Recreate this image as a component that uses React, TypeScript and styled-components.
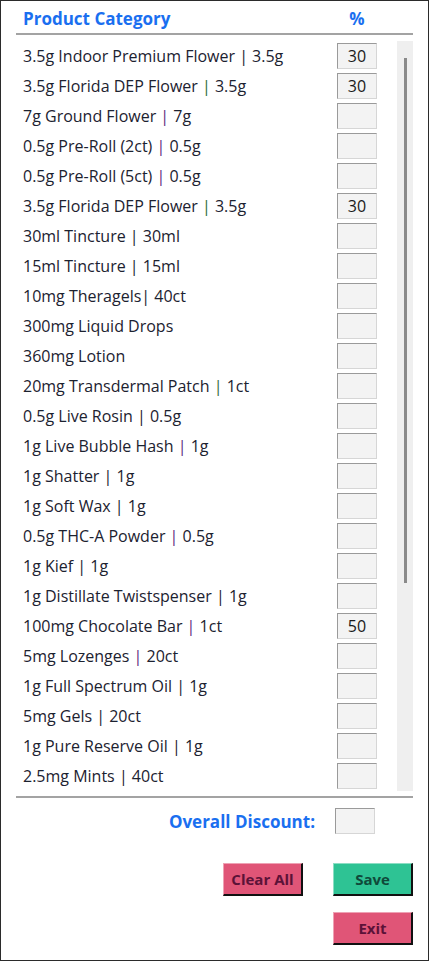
import React from "react";
import styled, { createGlobalStyle } from "styled-components";

const Global = createGlobalStyle`
  html, body { margin: 0; padding: 0; background: #fff; }
  body { font-family: "Open Sans", "Liberation Sans", sans-serif; }
  * { box-sizing: border-box; }
`;

const Frame = styled.div`
  width: 429px;
  height: 961px;
  border: 1px solid #2b2b2b;
  display: flex;
  flex-direction: column;
  background: #fff;
`;

const Header = styled.div`
  margin: 0 15px;
  height: 34px;
  border-bottom: 2px solid #a3a3a3;
  display: flex;
  align-items: center;
  padding-left: 7px;
  padding-top: 2px;
  color: #1a6ff0;
  font-weight: 700;
  font-size: 17px;
`;

const HeaderTitle = styled.div`
  flex: 1;
`;

const HeaderPct = styled.div`
  width: 40px;
  margin-right: 36px;
  text-align: center;
`;

const ListArea = styled.div`
  margin: 6px 15px 0 15px;
  height: 750px;
  display: flex;
`;

const Rows = styled.div`
  flex: 1;
  overflow: hidden;
  display: flex;
  flex-direction: column;
`;

const Row = styled.div`
  height: 30px;
  flex: 0 0 30px;
  display: flex;
  align-items: center;
  padding-left: 7px;
  padding-right: 20px;
  font-size: 16px;
  color: #1c2230;
`;

const RowLabel = styled.div`
  flex: 1;
  white-space: nowrap;
`;

const Pipe = styled.span<{ $tone: string }>`
  color: ${(p) => p.$tone};
`;

const Box = styled.div`
  width: 40px;
  height: 26px;
  background: #f3f3f3;
  border-top: 1px solid #9a9a9a;
  border-left: 1px solid #9a9a9a;
  border-right: 1px solid #d6d6d6;
  border-bottom: 1px solid #d6d6d6;
  display: flex;
  align-items: center;
  justify-content: center;
  font-size: 16px;
  color: #1a1a1a;
  font-weight: 400;
`;

const Track = styled.div`
  width: 16px;
  background: #efefef;
  display: flex;
  justify-content: center;
  padding-top: 17px;
`;

const Thumb = styled.div`
  width: 3px;
  height: 525px;
  background: #8a8a8a;
`;

const Divider = styled.div`
  margin: 5px 15px 0 15px;
  border-top: 2px solid #a3a3a3;
`;

const DiscountRow = styled.div`
  display: flex;
  align-items: center;
  justify-content: flex-end;
  padding-right: 53px;
  margin-top: 10px;
  gap: 20px;
  color: #1a6ff0;
  font-weight: 700;
  font-size: 17px;
`;

const ButtonGrid = styled.div`
  display: grid;
  grid-template-columns: 80px 80px;
  column-gap: 30px;
  row-gap: 16px;
  justify-content: end;
  padding-right: 15px;
  margin-top: 29px;
`;

const Btn = styled.button<{ $bg: string; $fg: string; $col: number }>`
  grid-column: ${(p) => p.$col};
  height: 33px;
  background: ${(p) => p.$bg};
  color: ${(p) => p.$fg};
  font-family: "Open Sans", "Liberation Sans", sans-serif;
  font-weight: 700;
  font-size: 15px;
  border: none;
  border-top: 1px solid rgba(255, 255, 255, 0.45);
  border-left: 1px solid rgba(255, 255, 255, 0.45);
  border-right: 2px solid #111;
  border-bottom: 2px solid #111;
  padding: 0;
  cursor: pointer;
`;

type Item = { name: string; unit?: string; tone: string; value?: string };

const GREEN = "#2f6a3a";
const PURPLE = "#5e2a80";
const DARK = "#1c2230";

const items: Item[] = [
  { name: "3.5g Indoor Premium Flower", unit: "3.5g", tone: DARK, value: "30" },
  { name: "3.5g Florida DEP Flower", unit: "3.5g", tone: GREEN, value: "30" },
  { name: "7g Ground Flower", unit: "7g", tone: PURPLE },
  { name: "0.5g Pre-Roll (2ct)", unit: "0.5g", tone: PURPLE },
  { name: "0.5g Pre-Roll (5ct)", unit: "0.5g", tone: PURPLE },
  { name: "3.5g Florida DEP Flower", unit: "3.5g", tone: GREEN, value: "30" },
  { name: "30ml Tincture", unit: "30ml", tone: DARK },
  { name: "15ml Tincture", unit: "15ml", tone: DARK },
  { name: "10mg Theragels", unit: "40ct", tone: DARK },
  { name: "300mg Liquid Drops", tone: DARK },
  { name: "360mg Lotion", tone: DARK },
  { name: "20mg Transdermal Patch", unit: "1ct", tone: GREEN },
  { name: "0.5g Live Rosin", unit: "0.5g", tone: DARK },
  { name: "1g Live Bubble Hash", unit: "1g", tone: PURPLE },
  { name: "1g Shatter", unit: "1g", tone: DARK },
  { name: "1g Soft Wax", unit: "1g", tone: DARK },
  { name: "0.5g THC-A Powder", unit: "0.5g", tone: PURPLE },
  { name: "1g Kief", unit: "1g", tone: DARK },
  { name: "1g Distillate Twistspenser", unit: "1g", tone: DARK },
  { name: "100mg Chocolate Bar", unit: "1ct", tone: PURPLE, value: "50" },
  { name: "5mg Lozenges", unit: "20ct", tone: PURPLE },
  { name: "1g Full Spectrum Oil", unit: "1g", tone: DARK },
  { name: "5mg Gels", unit: "20ct", tone: DARK },
  { name: "1g Pure Reserve Oil", unit: "1g", tone: DARK },
  { name: "2.5mg Mints", unit: "40ct", tone: DARK },
];

export default function App() {
  return (
    <>
      <Global />
      <Frame>
        <Header>
          <HeaderTitle>Product Category</HeaderTitle>
          <HeaderPct>%</HeaderPct>
        </Header>
        <ListArea>
          <Rows>
            {items.map((it, i) => (
              <Row key={i}>
                <RowLabel>
                  {it.name}
                  {it.unit !== undefined && (
                    <>
                      {it.name === "10mg Theragels" ? "" : " "}
                      <Pipe $tone={it.tone}>|</Pipe> {it.unit}
                    </>
                  )}
                </RowLabel>
                <Box>{it.value}</Box>
              </Row>
            ))}
          </Rows>
          <Track>
            <Thumb />
          </Track>
        </ListArea>
        <Divider />
        <DiscountRow>
          <span>Overall Discount:</span>
          <Box />
        </DiscountRow>
        <ButtonGrid>
          <Btn $bg="#e05577" $fg="#5c1238" $col={1}>Clear All</Btn>
          <Btn $bg="#2ec394" $fg="#10493a" $col={2}>Save</Btn>
          <Btn $bg="#e05577" $fg="#5c1238" $col={2}>Exit</Btn>
        </ButtonGrid>
      </Frame>
    </>
  );
}
